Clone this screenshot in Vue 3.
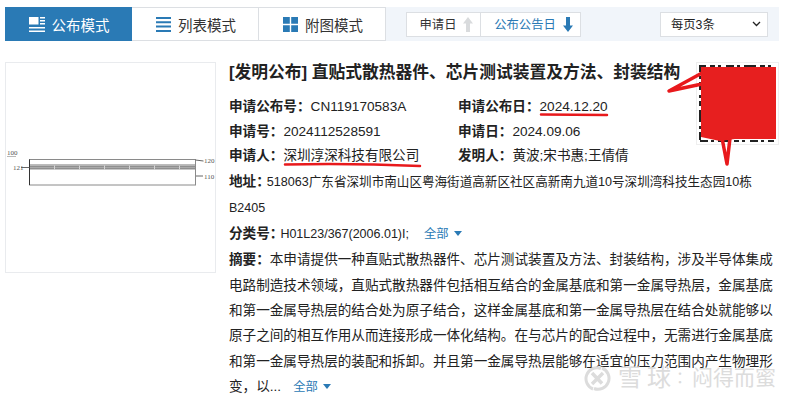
<script setup>
const rows = [
  [['申请公布号：', 'CN119170583A'], ['申请公布日：', '2024.12.20']],
  [['申请号：', '2024112528591'], ['申请日：', '2024.09.06']],
  [['申请人：', '深圳淳深科技有限公司'], ['发明人：', '黄波;宋书惠;王倩倩']],
]
const lines = [
  '电路制造技术领域，直贴式散热器件包括相互结合的金属基底和第一金属导热层，金属基底',
  '和第一金属导热层的结合处为原子结合，这样金属基底和第一金属导热层在结合处就能够以',
  '原子之间的相互作用从而连接形成一体化结构。在与芯片的配合过程中，无需进行金属基底',
  '和第一金属导热层的装配和拆卸。并且第一金属导热层能够在适宜的压力范围内产生物理形',
]
const ticks = [48, 73, 98, 123, 148, 173]
</script>

<template>
  <div class="page">
    <header class="toolbar">
      <div class="tabs">
        <button class="tab active">
          <svg width="16" height="15" viewBox="0 0 16 15"><path d="M0 0h9.500v7.500H0zM11 0h5v1.500h-5zM11 3h5v1.500h-5zM11 6h5v1.500h-5zM0 10h16v1.500H0zM0 13.500h16V15H0z" fill="#fff"/></svg>
          公布模式
        </button>
        <button class="tab">
          <svg width="15" height="15" viewBox="0 0 15 15"><path d="M0 0h15v2H0zM0 4.300h15v2H0zM0 8.600h15v2H0zM0 13h15v2H0z" fill="#2a7ab5"/></svg>
          列表模式
        </button>
        <button class="tab">
          <svg width="15" height="15" viewBox="0 0 15 15"><path d="M0 0h6.800v6.800H0zM8.200 0H15v6.800H8.200zM0 8.200h6.800V15H0zM8.200 8.200H15V15H8.200z" fill="#2a7ab5"/></svg>
          附图模式
        </button>
      </div>
      <div class="sort">
        <button class="sort-btn first">
          申请日
          <svg width="10" height="15" viewBox="0 0 10 15"><path d="M5 0 10 6.500H7V15H3V6.500H0z" fill="#d9dbdd"/></svg>
        </button>
        <button class="sort-btn second">
          公布公告日
          <svg width="10" height="15" viewBox="0 0 10 15"><path d="M5 15 10 8.500H7V0H3v8.500H0z" fill="#2a7ab5"/></svg>
        </button>
      </div>
      <div class="select">
        <span>每页3条</span>
        <svg width="9" height="6" viewBox="0 0 9 6"><path d="M1 1l3.500 3.500L8 1" fill="none" stroke="#222" stroke-width="1.300"/></svg>
      </div>
    </header>

    <main class="result">
      <figure class="thumb">
        <svg width="209" height="209" viewBox="0 0 209 209">
          <rect x="23.500" y="96.500" width="166" height="25.500" fill="none" stroke="#8a8a8a"/>
          <path d="M23.500 96.500V122" stroke="#333"/>
          <rect x="24" y="101" width="165" height="1.500" fill="#bbb"/>
          <rect x="24" y="102.500" width="165" height="4" fill="#8f8f8f"/>
          <rect x="24" y="104" width="165" height="1" fill="#a9a9a9"/>
          <path v-for="t in ticks" :key="t" :d="`M${t}.5 102.500v4`" stroke="#d5d5d5"/>
          <path d="M189.500 97l8 1M190 113h7M15 104.500h8.500" stroke="#666"/>
          <g class="drawing-label">
            <text x="1" y="92">100</text>
            <path d="M1 93.500h9" stroke="#888" stroke-width=".6"/>
            <text x="7" y="107">121</text>
            <text x="198" y="100">120</text>
            <text x="198" y="116">110</text>
          </g>
        </svg>
      </figure>
      <section class="info">
        <h1 class="title">[发明公布] 直贴式散热器件、芯片测试装置及方法、封装结构</h1>
        <div class="meta" v-for="(r, i) in rows" :key="i">
          <div class="cell" v-for="c in r" :key="c[0]"><b>{{ c[0] }}</b>{{ c[1] }}</div>
        </div>
        <p class="line address"><b class="tight">地址：</b><span class="small addr">518063广东省深圳市南山区粤海街道高新区社区高新南九道10号深圳湾科技生态园10栋</span></p>
        <p class="line"><span class="small">B2405</span></p>
        <p class="line"><b class="tight">分类号：</b><span class="small">H01L23/367(2006.01)I;</span><span class="all first-all">全部<i class="caret"></i></span></p>
        <p class="line"><b>摘要：</b>本申请提供一种直贴式散热器件、芯片测试装置及方法、封装结构，涉及半导体集成</p>
        <p class="line" v-for="l in lines" :key="l">{{ l }}</p>
        <p class="line">变，以...<span class="all">全部<i class="caret"></i></span></p>
      </section>
      <div class="qr">
        <svg class="qr-code" width="79" height="79" viewBox="0 0 79 79">
          <path d="M2 76V2h74M2 77h74" fill="none" stroke="#222" stroke-width="2" stroke-dasharray="8 3 3 4 12 4 5 3 3 5"/>
        </svg>
      </div>
    </main>

    <svg class="marks" width="800" height="401" viewBox="0 0 800 401">
      <g fill="none" stroke="#e8191c" stroke-linecap="round" stroke-linejoin="round">
        <path d="M285 164.500 Q350 163 420 166" stroke-width="2.500"/>
        <path d="M541 114.500 L607 115" stroke-width="2.500"/>
        <path d="M702 73 L669 91 L702 84" stroke-width="3.500"/>
        <path d="M722 138 L727 164 L730 138" stroke-width="3.500"/>
      </g>
      <path d="M701 67H776V139H735L720 141 701 137z" fill="#e71f1f"/>
    </svg>

    <div class="watermark">
      <svg width="29" height="25" viewBox="0 0 29 25">
        <path d="M18 2.500A11 11 0 1 0 10 23M11 22.500A11 11 0 1 0 19 2" fill="none" stroke="#dcdcdc" stroke-width="3"/>
        <path d="M9 7l10 10.500M20 7 9 18" stroke="#dcdcdc" stroke-width="3.500"/>
      </svg>
      <span class="wm-name">雪球</span><span class="wm-colon">：</span><span class="wm-user">闷得而蜜</span>
    </div>
  </div>
</template>

<style scoped>
.page {
  position: relative;
  width: 800px;
  height: 401px;
  overflow: hidden;
  background: #fff;
  font-family: "Liberation Sans", "Noto Sans CJK SC", sans-serif;
  color: #222;
}
.toolbar {
  margin: 7px 21px 0 5px;
  height: 34px;
  display: flex;
  align-items: center;
  background: #f1f5fa;
}
.tabs { display: flex; height: 34px; }
.tab {
  width: 127px;
  display: flex;
  align-items: center;
  justify-content: center;
  gap: 7px;
  padding: 0 0 0 2px;
  background: #fff;
  border: 1px solid #dcdfe3;
  border-width: 1px 1px 1px 0;
  font: inherit;
  font-size: 14.500px;
  color: #333;
}
.tab.active { background: #2a7ab5; color: #fff; border-color: #2a7ab5; }
.sort { display: flex; margin-left: 20px; height: 25px; }
.sort-btn {
  display: flex;
  align-items: center;
  justify-content: center;
  gap: 7px;
  padding: 0 0 0 6px;
  background: #fff;
  border: 1px solid #dcdfe3;
  font: inherit;
  font-size: 12.300px;
  color: #333;
}
.sort-btn.first { width: 75px; }
.sort-btn.second { width: 100px; border-left: 0; color: #2a7ab5; }
.select {
  margin-left: 79px;
  width: 108px;
  height: 25px;
  box-sizing: border-box;
  border: 1px solid #dcdfe3;
  background: #fff;
  display: flex;
  align-items: center;
  justify-content: space-between;
  padding: 0 6px 0 10px;
  font-size: 12.300px;
}
.result { display: flex; margin: 21px 0 0 5px; }
.thumb {
  margin: 0;
  width: 209px;
  height: 209px;
  flex: none;
  border: 1px solid #e9ebee;
}
.drawing-label { font: 7px "Liberation Serif", serif; fill: #555; }
.info { margin-left: 13px; width: 552px; flex: none; }
.title {
  margin: 0 0 11px;
  font-size: 16.750px;
  line-height: 22px;
  font-weight: 700;
  color: #222;
  white-space: nowrap;
}
.meta { display: flex; height: 24.500px; line-height: 24.500px; font-size: 13.600px; }
.cell { width: 229px; white-space: nowrap; }
b { font-weight: 700; }
.tight { margin-right: -3px; }
.small { font-size: 12.500px; }
.addr { font-size: 12.580px; }
.address { margin-top: 1px; }
.line { margin: 0; font-size: 13.600px; line-height: 25.300px; white-space: nowrap; }
.all { color: #2a7ab5; margin-left: 12px; font-size: 12.300px; }
.first-all { margin-left: 15px; }
.caret {
  display: inline-block;
  margin-left: 5px;
  vertical-align: 2px;
  border: 4.500px solid transparent;
  border-top: 5px solid #2a7ab5;
  border-bottom: 0;
}
.qr {
  position: absolute;
  left: 696px;
  top: 62px;
  width: 83px;
  height: 83px;
  border: 1px solid #eee;
  box-sizing: border-box;
}
.qr-code { display: block; margin: 1px 0 0 1px; }
.marks { position: absolute; left: 0; top: 0; pointer-events: none; }
.watermark {
  position: absolute;
  left: 583px;
  top: 366px;
  height: 24px;
  display: flex;
  align-items: center;
  color: #dcdcdc;
  white-space: nowrap;
  line-height: 20px;
}
.wm-name { margin-left: 6px; font-size: 24px; letter-spacing: 5px; }
.wm-colon { font-size: 16px; }
.wm-user { font-size: 21px; }
</style>
